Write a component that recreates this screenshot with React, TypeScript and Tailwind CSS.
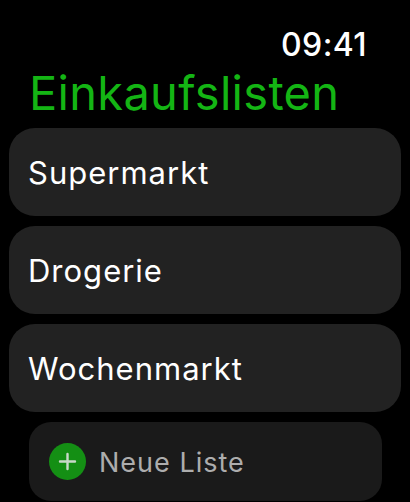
const lists = ['Supermarkt', 'Drogerie', 'Wochenmarkt'];

export default function App() {
  return (
    <div className="w-[410px] h-[502px] overflow-hidden bg-black font-['Inter',sans-serif] flex flex-col">
      <div className="h-[32px] mt-[29px] pr-[43px] flex items-center justify-end text-white text-[32px] font-medium leading-none tracking-[0.4px]">
        09:41
      </div>
      <h1 className="h-[67px] pl-[29px] pt-[2px] text-[#14b514] text-[47px] leading-[60px] tracking-[0.3px] font-normal">Einkaufslisten</h1>
      <div className="flex flex-col gap-[10px] px-[9px]">
        {lists.map((name) => (
          <div key={name} className="h-[88px] rounded-[26px] bg-[#222222] pl-[19px] pt-[2px] flex items-center text-white text-[31px] tracking-[1px]">
            {name}
          </div>
        ))}
      </div>
      <div className="mt-[10px] ml-[29px] w-[353px] h-[79px] rounded-[22px] bg-[#1a1a1a] pl-[20px] flex items-center gap-[13px]">
        <div className="w-[37px] h-[37px] rounded-full bg-[#148f14] flex items-center justify-center">
          <svg width="19" height="19" viewBox="0 0 19 19" fill="none" stroke="#c9d9c9" strokeWidth="2.4" strokeLinecap="round">
            <path d="M9.5 2v15M2 9.5h15" />
          </svg>
        </div>
        <span className="text-[#adadad] text-[27px] tracking-[1px] pt-[4px]">Neue Liste</span>
      </div>
    </div>
  );
}
